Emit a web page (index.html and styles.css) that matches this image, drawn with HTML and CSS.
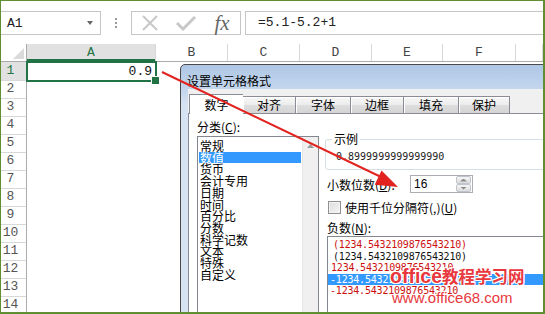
FILE: index.html
```html
<!DOCTYPE html>
<html lang="zh-CN">
<head>
    <meta charset="UTF-8">
    <title>设置单元格格式</title>
    <link rel="stylesheet" href="styles.css">
</head>
<body>
<div class="app">
    <div class="top-gap"></div>

    <div class="fbar">
        <div class="namebox"><span>A1</span><i class="dd"></i></div>
        <div class="grip"><i></i><i></i><i></i></div>
        <div class="fbtns">
            <div class="fbtn">
                <svg width="20" height="16" viewBox="0 0 20 16"><path d="M3 1 L17 15 M17 1 L3 15" stroke="#c8c8c8" stroke-width="2" fill="none"/></svg>
            </div>
            <div class="fbtn">
                <svg width="22" height="16" viewBox="0 0 22 16"><path d="M2 8 L8 14 L20 2" stroke="#c8c8c8" stroke-width="3" fill="none"/></svg>
            </div>
            <div class="fbtn"><span class="fx">fx</span></div>
        </div>
        <div class="finput">=5.1-5.2+1</div>
    </div>

    <div class="sheet">
        <div class="colhead">
            <div class="corner"><i></i></div>
            <div class="cur">A</div>
            <div>B</div>
            <div>C</div>
            <div>D</div>
            <div>E</div>
            <div>F</div>
            <div></div>
        </div>
        <div class="row"><div class="rh cur">1</div><div class="cell sel">0.9</div><div></div></div>
        <div class="row"><div class="rh">2</div><div></div><div></div></div>
        <div class="row"><div class="rh">3</div><div></div><div></div></div>
        <div class="row"><div class="rh">4</div><div></div><div></div></div>
        <div class="row"><div class="rh">5</div><div></div><div></div></div>
        <div class="row"><div class="rh">6</div><div></div><div></div></div>
        <div class="row"><div class="rh">7</div><div></div><div></div></div>
        <div class="row"><div class="rh">8</div><div></div><div></div></div>
        <div class="row"><div class="rh">9</div><div></div><div></div></div>
        <div class="row"><div class="rh">10</div><div></div><div></div></div>
        <div class="row"><div class="rh">11</div><div></div><div></div></div>
        <div class="row"><div class="rh">12</div><div></div><div></div></div>
        <div class="row"><div class="rh">13</div><div></div><div></div></div>
        <div class="row"><div class="rh">14</div><div></div><div></div></div>
    </div>

    <!-- dialog sits over the sheet -->
    <div class="dialog">
        <div class="dlg-title">设置单元格格式</div>
        <div class="dlg-body">
            <div class="tabs">
                <div class="tab active" style="width:54px">数字</div>
                <div class="tab" style="width:52px">对齐</div>
                <div class="tab" style="width:55px">字体</div>
                <div class="tab" style="width:53px">边框</div>
                <div class="tab" style="width:55px">填充</div>
                <div class="tab last" style="width:52px">保护</div>
            </div>
            <div class="page">
                <div class="col-left">
                    <div class="lbl">分类(<u>C</u>):</div>
                    <div class="catlist">
                        <div class="items">
                            <div>常规</div>
                            <div class="on">数值</div>
                            <div>货币</div>
                            <div>会计专用</div>
                            <div>日期</div>
                            <div>时间</div>
                            <div>百分比</div>
                            <div>分数</div>
                            <div>科学记数</div>
                            <div>文本</div>
                            <div>特殊</div>
                            <div>自定义</div>
                        </div>
                        <div class="vscroll"><div class="sbtn"><i></i></div></div>
                    </div>
                </div>
                <div class="col-right">
                    <div class="group">
                        <span class="legend">示例</span>
                        <div class="sample">0.8999999999999990</div>
                    </div>
                    <div class="decrow">
                        <span class="declbl">小数位数(<u>D</u>):</span>
                        <div class="spin">
                            <span>16</span>
                            <div class="spinbtns">
                                <div class="sb"><i class="up"></i></div>
                                <div class="sb"><i class="down"></i></div>
                            </div>
                        </div>
                    </div>
                    <div class="chkrow"><span class="chk"></span><span>使用千位分隔符(,)(<u>U</u>)</span></div>
                    <div class="lbl neglbl">负数(<u>N</u>):</div>
                    <div class="neglist">
                        <div class="red p5">(1234.5432109876543210)</div>
                        <div class="p5">(1234.5432109876543210)</div>
                        <div class="red p3">1234.5432109876543210</div>
                        <div class="on p2">-1234.5432109876543210</div>
                        <div class="red p2">-1234.5432109876543210</div>
                    </div>
                </div>
            </div>
        </div>
    </div>

    <svg class="arrow" width="545" height="314" viewBox="0 0 545 314">
        <line x1="162" y1="72" x2="380" y2="176.5" stroke="#e2231f" stroke-width="2"/>
        <polygon points="398,187 374.7,184.8 381.5,170.4" fill="#e2231f"/>
    </svg>

    <div class="wm wm1"><span class="lat">office</span><span class="cjk">教程学习网</span></div>
    <div class="wm wm2">www.office68.com</div>
</div>
</body>
</html>
```

FILE: styles.css
```css
* {
    margin: 0;
    padding: 0;
    box-sizing: border-box;
}

body {
    font-family: "Noto Sans CJK SC", sans-serif;
    font-size: 12px;
    color: #000;
    background: #fff;
}

u {
    text-decoration: underline;
}

.app {
    position: relative;
    width: 545px;
    height: 314px;
    overflow: hidden;
    background: #fff;
    border-style: solid;
    border-color: #5f8f31;
    border-width: 1px 2px 2px 1px;
}

.top-gap {
    height: 10px;
}

/* formula bar */
.fbar {
    display: flex;
    height: 24px;
    font-family: "Liberation Mono", monospace;
    font-size: 13px;
    color: #222;
}

.namebox {
    width: 100px;
    border: 1px solid #c6c6c6;
    border-left: none;
    display: flex;
    align-items: center;
    justify-content: space-between;
    padding: 0 7px 0 6px;
}

.dd {
    border-top: 4px solid #666;
    border-left: 3px solid transparent;
    border-right: 3px solid transparent;
}

.grip {
    width: 30px;
    display: flex;
    flex-direction: column;
    align-items: center;
    justify-content: center;
    gap: 2px;
}

.grip i {
    width: 2px;
    height: 2px;
    background: #9a9a9a;
}

.fbtns {
    width: 110px;
    border: 1px solid #c6c6c6;
    display: flex;
}

.fbtn {
    width: 36px;
    display: flex;
    align-items: center;
    justify-content: center;
}

.fx {
    font-family: "Liberation Serif", serif;
    font-style: italic;
    font-size: 21px;
    line-height: 20px;
    color: #666;
}

.finput {
    flex: 1;
    margin-left: 4px;
    border: 1px solid #c6c6c6;
    border-right: none;
    padding-left: 12px;
    line-height: 22px;
}

/* sheet grid */
.sheet {
    margin-top: 9px;
    font-family: "Liberation Mono", monospace;
    font-size: 13px;
    color: #444;
}

.colhead {
    display: grid;
    grid-template-columns: 26px 129px 72px 72px 72px 71px 73px 1fr;
    height: 18px;
    border-bottom: 1px solid #ababab;
}

.colhead div {
    border-right: 1px solid #d8d8d8;
    text-align: center;
    line-height: 17px;
}

.colhead .cur {
    background: #e1e1e1;
    color: #217346;
    box-shadow: inset 0 -2px 0 #217346;
}

.colhead .corner {
    display: flex;
    justify-content: flex-end;
    align-items: flex-end;
    padding: 0 2px 2px 0;
    border-right: 1px solid #ababab;
}

.corner i {
    width: 11px;
    height: 11px;
    background: #dadada;
    clip-path: polygon(100% 0, 100% 100%, 0 100%);
}

.row {
    display: grid;
    grid-template-columns: 26px 129px 1fr;
    height: 18px;
}

.rh {
    border-right: 1px solid #ababab;
    border-bottom: 1px solid #d8d8d8;
    text-align: center;
    padding-right: 6px;
    line-height: 18px;
    color: #555;
}

.rh.cur {
    background: #e1e1e1;
    color: #217346;
}

.cell.sel {
    position: relative;
    text-align: right;
    padding-right: 4px;
    line-height: 19px;
    color: #111;
}

.cell.sel::before {
    content: "";
    position: absolute;
    left: -1px;
    top: -1px;
    right: -1px;
    bottom: -1px;
    border: 2px solid #217346;
}

.cell.sel::after {
    content: "";
    position: absolute;
    right: -4px;
    bottom: -4px;
    width: 7px;
    height: 7px;
    background: #217346;
    border: 1px solid #fff;
}

/* format cells dialog */
.dialog {
    position: absolute;
    left: 179px;
    top: 63px;
    width: 380px;
    height: 262px;
    border: 1px solid #4a4a4a;
    border-radius: 5px 5px 0 0;
    background: linear-gradient(#aec7e5, #c6d8ee 27px, #d6e3f2 40px);
    padding-left: 7px;
    display: flex;
    flex-direction: column;
}

.dlg-title {
    height: 28px;
    padding-top: 8px;
    margin-left: -1px;
    line-height: 16px;
}

.dlg-body {
    flex: 1;
    background: #f0f0f0;
    padding-top: 5px;
    display: flex;
    flex-direction: column;
}

.tabs {
    display: flex;
    align-items: flex-end;
    height: 20px;
    padding-left: 1px;
}

.tab {
    height: 17px;
    margin-bottom: 1px;
    border: 1px solid #898c95;
    border-bottom: none;
    border-right: none;
    background: linear-gradient(#f7f7f7, #ececec 50%, #dedede 51%, #d4d4d4);
    box-shadow: inset 1px 1px 0 #fff;
    text-align: center;
    line-height: 16px;
}

.tab.last {
    border-right: 1px solid #898c95;
}

.tab.active {
    position: relative;
    height: 20px;
    margin-bottom: 0;
    background: #fff;
    box-shadow: none;
    line-height: 20px;
}

.tab.active + .tab {
    border-left: none;
}

.page {
    flex: 1;
    margin-top: -1px;
    border: 1px solid #898c95;
    background: #fff;
    display: grid;
    grid-template-columns: 122px 1fr;
    column-gap: 7px;
    align-items: start;
    padding: 6px 0 0 8px;
}

.lbl {
    line-height: 14px;
}

.catlist {
    display: flex;
    margin-top: 2px;
    height: 200px;
    border: 1px solid #828790;
}

.items {
    flex: 1;
    padding: 3px 1px 0;
    line-height: 11.7px;
}

.items div {
    padding-left: 1px;
    white-space: nowrap;
}

.on {
    background: #3399ff;
    color: #fff;
}

.vscroll {
    width: 16px;
    border-left: 1px solid #e6e6e6;
    background: #f0f0f0;
}

.sbtn {
    height: 18px;
    display: flex;
    align-items: center;
    justify-content: center;
}

.sbtn i {
    width: 7px;
    height: 4px;
    background: #9a9a9a;
    clip-path: polygon(50% 0, 100% 100%, 0 100%);
}

.group {
    position: relative;
    margin: 19px 0 0 -1px;
    height: 31px;
    border: 1px solid #d5dfe5;
    border-radius: 3px;
    padding: 11px 0 0 10px;
}

.legend {
    position: absolute;
    left: 6px;
    top: -8px;
    padding: 0 2px;
    background: #fff;
    line-height: 14px;
}

.sample {
    font-family: "DejaVu Sans Mono", monospace;
    font-size: 10px;
    line-height: 12px;
    color: #222;
}

.decrow {
    display: flex;
    align-items: center;
    height: 18px;
    margin-top: 5px;
    padding-left: 1px;
}

.declbl {
    width: 83px;
}

.spin {
    width: 63px;
    height: 18px;
    border: 1px solid #abadb3;
    display: flex;
    align-items: center;
    justify-content: space-between;
    padding: 0 1px 0 3px;
    font-family: "Liberation Sans", sans-serif;
    font-size: 12px;
}

.spinbtns {
    width: 15px;
    height: 16px;
    display: flex;
    flex-direction: column;
}

.sb {
    flex: 1;
    border: 1px solid #c0c4cc;
    border-radius: 2px;
    background: linear-gradient(#f6f6f6, #dcdcdc);
    display: flex;
    align-items: center;
    justify-content: center;
}

.sb i {
    width: 7px;
    height: 3px;
    background: #8a8a8a;
}

.sb .up {
    clip-path: polygon(50% 0, 100% 100%, 0 100%);
}

.sb .down {
    clip-path: polygon(0 0, 100% 0, 50% 100%);
}

.chkrow {
    display: flex;
    align-items: center;
    height: 13px;
    margin-top: 8px;
    padding-left: 2px;
    gap: 4px;
}

.chk {
    width: 13px;
    height: 13px;
    border: 1px solid #8e8f8f;
    background: linear-gradient(135deg, #dcdcdc, #f6f6f6);
    box-shadow: inset 0 0 0 1px #f4f4f4;
}

.neglbl {
    margin-top: 7px;
    padding-left: 1px;
}

.neglist {
    margin: 1px 0 0 1px;
    height: 80px;
    border: 1px solid #828790;
    padding-top: 2px;
    font-family: "DejaVu Sans Mono", monospace;
    font-size: 10px;
    letter-spacing: -0.2px;
    line-height: 11.5px;
    color: #111;
}

.neglist div {
    white-space: nowrap;
}

.neglist .red {
    color: #cc1010;
}

.neglist .on {
    color: #fff;
}

.p5 {
    padding-left: 5px;
}

.p3 {
    padding-left: 3px;
}

.p2 {
    padding-left: 2px;
}

/* overlays */
.arrow {
    position: absolute;
    left: -1px;
    top: -1px;
    pointer-events: none;
}

.wm {
    position: absolute;
    color: #e8383d;
    white-space: nowrap;
    text-shadow: 1px 1px 0 #fff, -1px -1px 0 #fff, 1px -1px 0 #fff, -1px 1px 0 #fff, 0 0 2px #fff;
}

.wm1 {
    left: 389px;
    top: 263px;
    line-height: 24px;
}

.wm1 .lat {
    font-family: "Liberation Sans", sans-serif;
    font-size: 19.5px;
    font-weight: bold;
}

.wm1 .cjk {
    font-family: "Noto Sans CJK SC", sans-serif;
    font-size: 16.5px;
    font-weight: bold;
}

.wm2 {
    left: 391px;
    top: 288px;
    font-family: "Liberation Sans", sans-serif;
    font-size: 15px;
    line-height: 18px;
}
```
